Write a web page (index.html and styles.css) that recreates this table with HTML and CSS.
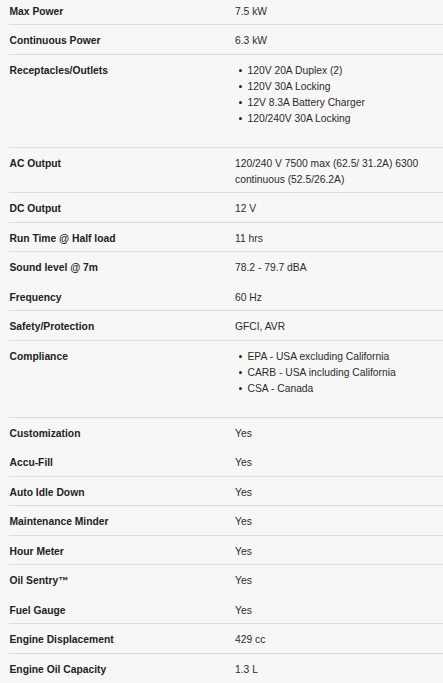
FILE: index.html
```html
<!DOCTYPE html>
<html lang="en">
<head>
<meta charset="utf-8">
<title>Specifications</title>
<link rel="stylesheet" href="styles.css">
</head>
<body>
<div class="specs">
  <div class="row"><div class="label">Max Power</div><div class="value">7.5 kW</div></div>
  <div class="row"><div class="label">Continuous Power</div><div class="value">6.3 kW</div></div>
  <div class="row"><div class="label">Receptacles/Outlets</div><div class="value">
    <ul class="list">
      <li>120V 20A Duplex (2)</li>
      <li>120V 30A Locking</li>
      <li>12V 8.3A Battery Charger</li>
      <li>120/240V 30A Locking</li>
    </ul></div></div>
  <div class="row"><div class="label">AC Output</div><div class="value">120/240 V 7500 max (62.5/ 31.2A) 6300 continuous (52.5/26.2A)</div></div>
  <div class="row"><div class="label">DC Output</div><div class="value">12 V</div></div>
  <div class="row"><div class="label">Run Time @ Half load</div><div class="value">11 hrs</div></div>
  <div class="row"><div class="label">Sound level @ 7m</div><div class="value">78.2 - 79.7 dBA</div></div>
  <div class="row no-line"><div class="label">Frequency</div><div class="value">60 Hz</div></div>
  <div class="row"><div class="label">Safety/Protection</div><div class="value">GFCI, AVR</div></div>
  <div class="row"><div class="label">Compliance</div><div class="value">
    <ul class="list">
      <li>EPA - USA excluding California</li>
      <li>CARB - USA including California</li>
      <li>CSA - Canada</li>
    </ul></div></div>
  <div class="row"><div class="label">Customization</div><div class="value">Yes</div></div>
  <div class="row no-line"><div class="label">Accu-Fill</div><div class="value">Yes</div></div>
  <div class="row"><div class="label">Auto Idle Down</div><div class="value">Yes</div></div>
  <div class="row"><div class="label">Maintenance Minder</div><div class="value">Yes</div></div>
  <div class="row"><div class="label">Hour Meter</div><div class="value">Yes</div></div>
  <div class="row"><div class="label">Oil Sentry™</div><div class="value">Yes</div></div>
  <div class="row no-line"><div class="label">Fuel Gauge</div><div class="value">Yes</div></div>
  <div class="row"><div class="label">Engine Displacement</div><div class="value">429 cc</div></div>
  <div class="row"><div class="label">Engine Oil Capacity</div><div class="value">1.3 L</div></div>
</div>
</body>
</html>
```
FILE: styles.css
```css
html, body {
  margin: 0;
  padding: 0;
  background: #f7f7f7;
  overflow: hidden;
}
body {
  font-family: "Liberation Sans", Arial, sans-serif;
  font-size: 10.3px;
  line-height: 16px;
  color: #262626;
}
.specs {
  margin: -5.5px 0 0 9px;
  width: 452px;
}
.row {
  display: grid;
  grid-template-columns: 226px 226px;
  border-top: 1px solid #dcdcdc;
  padding: 8px 0 4.5px;
}
.row.no-line {
  border-top-color: transparent;
}
.label {
  font-weight: bold;
  color: #222;
  padding-left: 0.5px;
}
.value {
  color: #2b2b2b;
  padding-right: 40px;
}
.list {
  list-style: none;
  margin: 0 0 15.5px 0;
  padding: 0;
}
.list li {
  display: flex;
  align-items: center;
}
.list li::before {
  content: "";
  width: 3.5px;
  height: 3.5px;
  border-radius: 50%;
  background: #262626;
  margin: 0 5.5px 0 3.5px;
  flex: none;
}
```
